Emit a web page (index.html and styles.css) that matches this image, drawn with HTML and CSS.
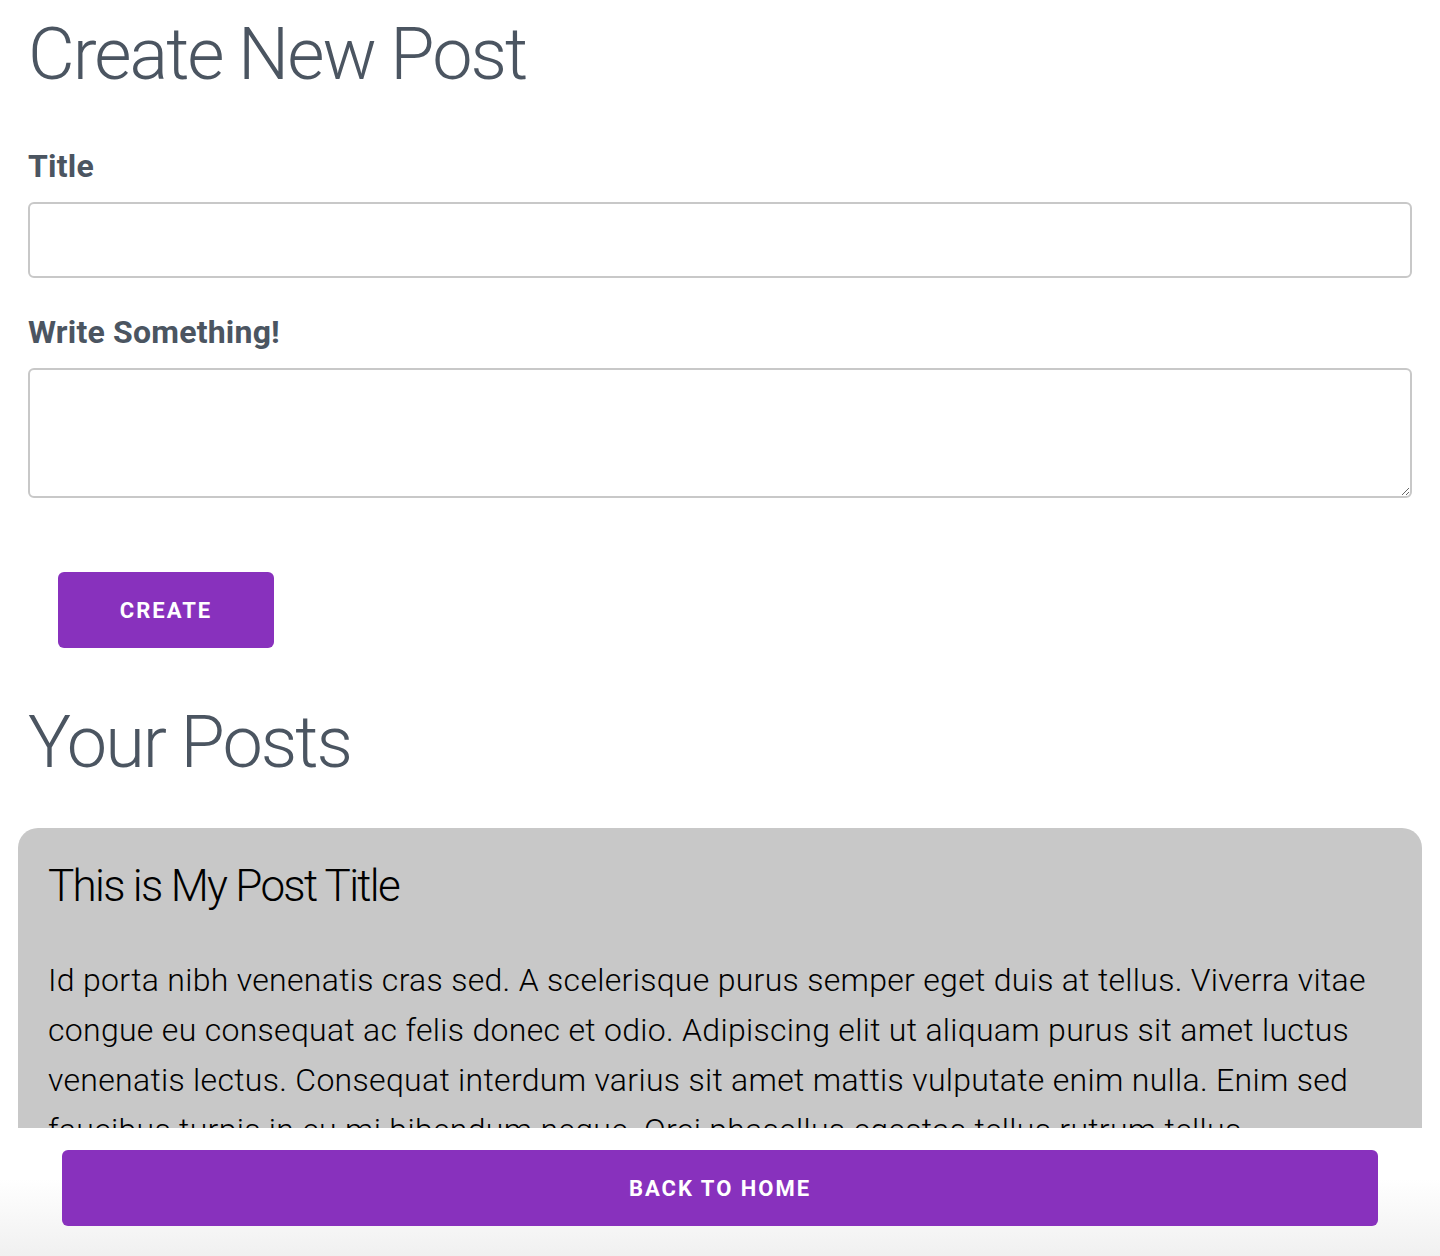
FILE: index.html
```html
<!DOCTYPE html>
<html lang="en">
<head>
<meta charset="utf-8">
<title>Create New Post</title>
<link rel="stylesheet" href="styles.css">
</head>
<body>
<div class="app">
  <main class="main">
    <h1 class="page-title">Create New Post</h1>
    <form class="form">
      <label class="label" for="title">Title</label>
      <input class="input" id="title" type="text">
      <label class="label label-body" for="body">Write Something!</label>
      <textarea class="textarea" id="body"></textarea>
      <div class="actions">
        <button type="button" class="btn btn-create">Create</button>
      </div>
    </form>
    <h2 class="page-title posts-title">Your Posts</h2>
    <article class="post">
      <h3 class="post-title">This is My Post Title</h3>
      <p class="post-body">Id porta nibh venenatis cras sed. A scelerisque purus semper eget duis at tellus. Viverra vitae congue eu consequat ac felis donec et odio. Adipiscing elit ut aliquam purus sit amet luctus venenatis lectus. Consequat interdum varius sit amet mattis vulputate enim nulla. Enim sed faucibus turpis in eu mi bibendum neque. Orci phasellus egestas tellus rutrum tellus.</p>
    </article>
  </main>
  <footer class="footer">
    <button type="button" class="btn btn-home">Back to Home</button>
  </footer>
</div>
</body>
</html>
```
FILE: styles.css
```css
* { box-sizing: border-box; }
html, body { margin: 0; padding: 0; height: 100%; }
body {
  font-family: Roboto, "Liberation Sans", sans-serif;
  background: #ffffff;
  color: #000;
}
.app {
  display: flex;
  flex-direction: column;
  height: 100vh;
}
.main {
  flex: 1;
  overflow: hidden;
  padding: 0 28px;
}
.page-title {
  margin: 0;
  font-weight: 300;
  font-size: 72px;
  line-height: 110px;
  color: #4b5561;
  letter-spacing: -2px;
}
.form {
  display: flex;
  flex-direction: column;
  padding-top: 36px;
}
.label {
  font-weight: 700;
  font-size: 32px;
  line-height: 40px;
  color: #4b5561;
  margin-bottom: 16px;
  letter-spacing: 0.2px;
}
.label-body { margin-top: 34px; }
.input, .textarea {
  display: block;
  width: 100%;
  border: 2px solid #c8c8c8;
  border-radius: 6px;
  font-family: inherit;
  font-size: 24px;
  padding: 8px 12px;
  background: #fff;
}
.input { height: 76px; }
.textarea { height: 130px; resize: vertical; }
.actions {
  padding: 74px 30px 40px;
}
.btn {
  display: block;
  border: none;
  background: #8831bd;
  color: #fff;
  font-family: inherit;
  font-weight: 700;
  text-transform: uppercase;
  border-radius: 6px;
  cursor: pointer;
}
.btn-create {
  width: 216px;
  height: 76px;
  font-size: 22px;
  letter-spacing: 2px;
}
.post {
  margin: 30px -10px 0;
  background: #c8c8c8;
  border-radius: 20px;
  padding: 26px 30px 30px;
}
.post-title {
  margin: 0;
  font-weight: 300;
  font-size: 44px;
  line-height: 64px;
  letter-spacing: -1.7px;
  color: #000;
}
.post-body {
  margin: 37px 0 0;
  font-weight: 300;
  font-size: 32px;
  line-height: 50px;
  letter-spacing: 0.3px;
  color: #000;
}
.footer {
  flex: 0 0 128px;
  background: linear-gradient(to bottom, #ffffff 0%, #ffffff 40%, #f0f0f0 100%);
  padding: 22px 62px 0;
}
.btn-home {
  width: 100%;
  height: 76px;
  font-size: 22px;
  letter-spacing: 2px;
}
```
